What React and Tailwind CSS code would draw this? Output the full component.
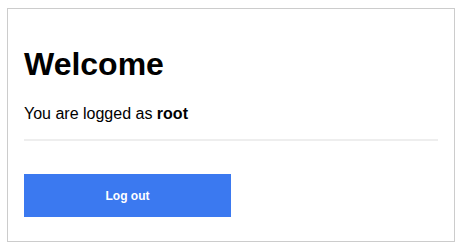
export default function App() {
  return (
    <div className="pt-[8px] pl-[7px] bg-white min-h-screen" style={{ fontFamily: '"Liberation Sans", Arial, sans-serif' }}>
      <div className="w-[448px] h-[234px] border border-[#cccccc] px-4 pt-[37px]">
        <h1 className="text-[32px] font-bold leading-[37px] text-black">Welcome</h1>
        <p className="mt-[22px] text-[16px] leading-[18px] text-black">
          You are logged as <b className="font-bold">root</b>
        </p>
        <div className="mt-[16px] h-[2px] bg-[#eeeeee]" />
        <button className="mt-[33px] w-[207px] h-[43px] bg-[#3b79f0] text-white text-[12px] font-bold">
          Log out
        </button>
      </div>
    </div>
  );
}
